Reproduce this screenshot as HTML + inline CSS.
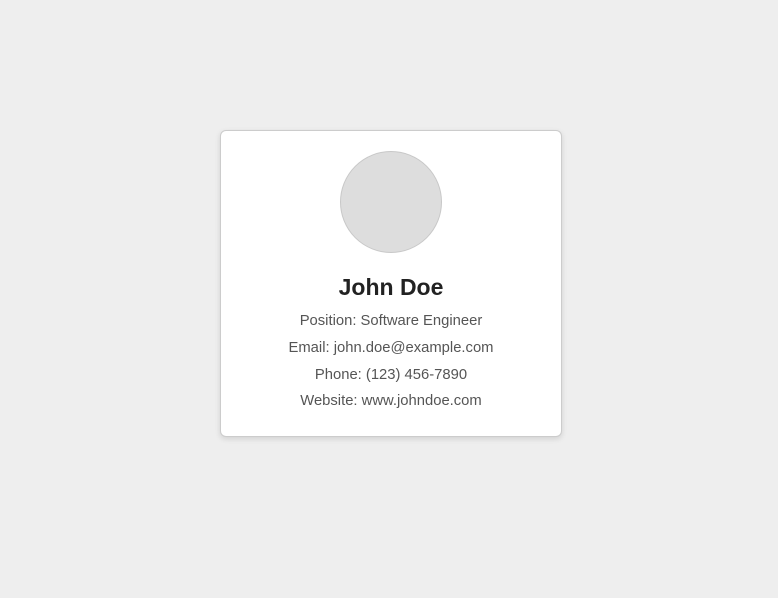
<!DOCTYPE html>
<html><head><style>
html,body{margin:0;padding:0;background:#eee;width:778px;height:598px;overflow:hidden;font-family:"Liberation Sans",sans-serif}
.card{position:absolute;left:220px;top:130px;width:340px;height:305px;background:#fff;border:1px solid #ccc;border-radius:6px;box-shadow:0 2px 6px rgba(0,0,0,0.12);text-align:center}
.av{position:absolute;left:119px;top:20px;width:100px;height:100px;border-radius:50%;background:#ddd;border:1px solid #c8c8c8}
h1{position:absolute;left:0;right:0;top:142px;margin:0;font-size:23px;line-height:28px;color:#222;font-weight:bold}
p{position:absolute;left:0;right:0;margin:0;font-size:14.8px;line-height:18px;color:#555}
</style></head><body>
<div class="card">
<div class="av"></div>
<h1>John Doe</h1>
<p style="top:181px">Position: Software Engineer</p>
<p style="top:208px">Email: john.doe@example.com</p>
<p style="top:235px">Phone: (123) 456-7890</p>
<p style="top:261px">Website: www.johndoe.com</p>
</div>
</body></html>
